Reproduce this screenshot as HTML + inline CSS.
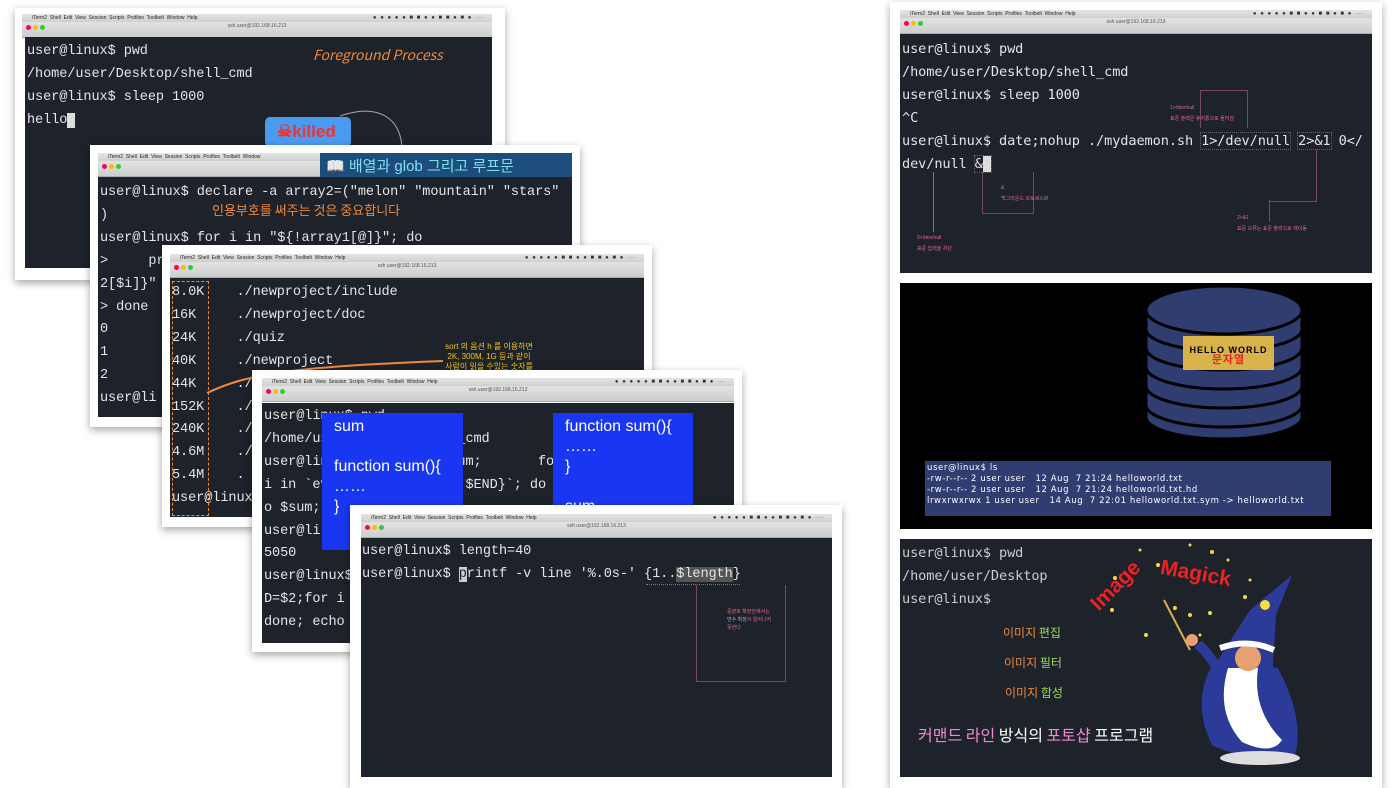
<!DOCTYPE html>
<html><head><meta charset="utf-8"><style>
*{margin:0;padding:0;box-sizing:border-box}
body{width:1400px;height:788px;background:#fff;position:relative;overflow:hidden;font-family:"Liberation Sans","Noto Sans CJK KR",sans-serif}
.card{position:absolute;background:#fff;box-shadow:0 3px 8px rgba(0,0,0,.35)}
.mb{position:absolute;height:8px;background:linear-gradient(#e4e4e4,#cfcfcf);font-size:5px;color:#222;line-height:8px;padding-left:10px;white-space:nowrap;overflow:hidden}
.mb::after{content:"● ● ● ● ● ■ ■ ● ● ■ ■ ● ■ ● ···";position:absolute;right:8px;top:0;font-size:6px;color:#333;letter-spacing:1px}
.tb{position:absolute;height:16px;background:linear-gradient(#e2e2e2,#cdcdcd);border-bottom:1px solid #aaa}
.tb i{position:absolute;top:3px;width:5px;height:5px;border-radius:50%}
.tb span{position:absolute;top:1px;left:0;right:0;text-align:center;font-size:5px;color:#555}
.term{position:absolute;background:#1e222b;overflow:hidden}
.t{position:absolute;margin-top:3px;font-family:"Liberation Mono","DejaVu Sans Mono",monospace;font-size:13.6px;color:#e4e4e4;white-space:pre;letter-spacing:-.1px;line-height:22.9px}
.hand{font-family:"Noto Sans CJK KR",sans-serif;position:absolute;white-space:nowrap}
.blue{position:absolute;background:#1937f2;color:#fff;font-size:16px;font-family:"Liberation Sans",sans-serif;padding:4px 12px;line-height:20px}
.small{position:absolute;font-size:5px;color:#e06a8a;white-space:nowrap}
.ln{position:absolute;border:1px solid #7a4a5a}
</style></head><body>

<!-- Window 1 -->
<div class="card" style="left:15px;top:8px;width:490px;height:272px"></div>
<div class="mb" style="left:22px;top:14px;width:470px"> iTerm2 &nbsp;Shell &nbsp;Edit &nbsp;View &nbsp;Session &nbsp;Scripts &nbsp;Profiles &nbsp;Toolbelt &nbsp;Window &nbsp;Help</div>
<div class="tb" style="left:22px;top:22px;width:470px"><i style="left:4px;background:#f05"></i><i style="left:11px;background:#fb0"></i><i style="left:18px;background:#3c3"></i><span>ssh user@192.168.16.213</span></div>
<div class="term" style="left:25px;top:37px;width:467px;height:231px"></div>
<div class="t" style="left:27px;top:38px">user@linux$ pwd
/home/user/Desktop/shell_cmd
user@linux$ sleep 1000
hello<span style="background:#ddd">&nbsp;</span></div>
<div class="hand" style="left:313px;top:45px;color:#f08a3a;font-size:14px;font-style:italic">Foreground Process</div>
<div style="position:absolute;left:265px;top:117px;width:86px;height:30px;background:#4a9bf0;border-radius:5px;color:#e33;font-weight:bold;font-size:17px;padding:5px 0 0 12px">☠killed</div>
<svg style="position:absolute;left:340px;top:110px" width="70" height="40"><path d="M0 6 C40 -8 62 10 62 40" stroke="#aaa" fill="none"/></svg>

<!-- Window 2 -->
<div class="card" style="left:90px;top:145px;width:490px;height:282px"></div>
<div class="mb" style="left:98px;top:153px;width:474px"> iTerm2 &nbsp;Shell &nbsp;Edit &nbsp;View &nbsp;Session &nbsp;Scripts &nbsp;Profiles &nbsp;Toolbelt &nbsp;Window</div>
<div class="tb" style="left:98px;top:161px;width:474px"><i style="left:4px;background:#f05"></i><i style="left:11px;background:#fb0"></i><i style="left:18px;background:#3c3"></i></div>
<div style="position:absolute;left:320px;top:153px;width:252px;height:24px;background:#1d4d7c;color:#7fe0f0;font-size:15px;padding:2px 0 0 6px;font-family:'Liberation Sans','Noto Sans CJK KR',sans-serif">📖 배열과 glob 그리고 루프문</div>
<div class="term" style="left:98px;top:177px;width:474px;height:240px"></div>
<div class="t" style="left:100px;top:179px">user@linux$ declare -a array2=("melon" "mountain" "stars"
)
user@linux$ for i in "${!array1[@]}"; do
&gt;     pr
2[$i]}"
&gt; done
0
1
2
user@li</div>
<div class="hand" style="left:212px;top:200px;color:#f08a3a;font-size:13px">인용부호를 써주는 것은 중요합니다</div>

<!-- Window 3 -->
<div class="card" style="left:162px;top:245px;width:490px;height:282px"></div>
<div class="mb" style="left:170px;top:254px;width:474px"> iTerm2 &nbsp;Shell &nbsp;Edit &nbsp;View &nbsp;Session &nbsp;Scripts &nbsp;Profiles &nbsp;Toolbelt &nbsp;Window &nbsp;Help</div>
<div class="tb" style="left:170px;top:262px;width:474px"><i style="left:4px;background:#f05"></i><i style="left:11px;background:#fb0"></i><i style="left:18px;background:#3c3"></i><span>ssh user@192.168.16.213</span></div>
<div class="term" style="left:170px;top:278px;width:474px;height:239px"></div>
<div style="position:absolute;left:172px;top:281px;width:37px;height:235px;border:1.5px dashed #f08a3a"></div>
<div class="t" style="left:172px;top:279px">8.0K    ./newproject/include
16K     ./newproject/doc
24K     ./quiz
40K     ./newproject
44K     ./
152K    ./
240K    ./
4.6M    ./
5.4M    .
user@linux</div>
<div style="position:absolute;left:444px;top:342px;font-size:8px;color:#f5c518;line-height:10px;text-align:center;width:90px">sort 의 옵션 h 를 이용하면<br>2K, 300M, 1G 등과 같이<br>사람이 읽을 수있는 숫자를</div>
<svg style="position:absolute;left:205px;top:355px" width="240" height="40"><path d="M2 38 C40 20 80 12 238 6" stroke="#f08a3a" stroke-width="2" fill="none"/></svg>

<!-- Window 4 -->
<div class="card" style="left:252px;top:370px;width:490px;height:282px"></div>
<div class="mb" style="left:262px;top:378px;width:472px"> iTerm2 &nbsp;Shell &nbsp;Edit &nbsp;View &nbsp;Session &nbsp;Scripts &nbsp;Profiles &nbsp;Toolbelt &nbsp;Window &nbsp;Help</div>
<div class="tb" style="left:262px;top:386px;width:472px"><i style="left:4px;background:#f05"></i><i style="left:11px;background:#fb0"></i><i style="left:18px;background:#3c3"></i><span>ssh user@192.168.16.213</span></div>
<div class="term" style="left:262px;top:403px;width:472px;height:240px"></div>
<div class="t" style="left:264px;top:403px">user@linux$ pwd
/home/user/Desktop/shell_cmd
user@linux$ declare -i sum;       for
i in `eval echo {$START..$END}`; do  ech
o $sum;
user@li
5050
user@linux$
D=$2;for i
done; echo</div>
<div class="blue" style="left:322px;top:413px;width:141px;height:137px">sum<br><br>function sum(){<br>……<br>}</div>
<div class="blue" style="left:553px;top:413px;width:140px;height:98px">function sum(){<br>……<br>}<br><br>sum</div>

<!-- Window 5 -->
<div class="card" style="left:350px;top:505px;width:492px;height:283px"></div>
<div class="mb" style="left:361px;top:514px;width:471px"> iTerm2 &nbsp;Shell &nbsp;Edit &nbsp;View &nbsp;Session &nbsp;Scripts &nbsp;Profiles &nbsp;Toolbelt &nbsp;Window &nbsp;Help</div>
<div class="tb" style="left:361px;top:522px;width:471px"><i style="left:4px;background:#f05"></i><i style="left:11px;background:#fb0"></i><i style="left:18px;background:#3c3"></i><span>ssh user@192.168.16.213</span></div>
<div class="term" style="left:361px;top:538px;width:471px;height:239px"></div>
<div class="t" style="left:362px;top:538px">user@linux$ length=40
user@linux$ <span style="background:#ccc;color:#222">p</span>rintf -v line '%.0s-' {1..<span style="background:#555">$length</span>}</div>
<div style="position:absolute;left:646px;top:584px;width:94px;border-top:1px dotted #777"></div>
<div class="ln" style="left:696px;top:585px;width:90px;height:97px;border-top:none"></div>
<div class="small" style="left:727px;top:608px;line-height:8px;background:#1e222b">중괄호 확장안에서는<br><span style="color:#8ad">변수 확장</span>이 일어나지<br>못한다</div>

<!-- Right card -->
<div class="card" style="left:890px;top:2px;width:492px;height:786px"></div>
<div class="mb" style="left:900px;top:10px;width:472px"> iTerm2 &nbsp;Shell &nbsp;Edit &nbsp;View &nbsp;Session &nbsp;Scripts &nbsp;Profiles &nbsp;Toolbelt &nbsp;Window &nbsp;Help</div>
<div class="tb" style="left:900px;top:18px;width:472px"><i style="left:4px;background:#f05"></i><i style="left:11px;background:#fb0"></i><i style="left:18px;background:#3c3"></i><span>ssh user@192.168.16.213</span></div>
<div class="term" style="left:900px;top:34px;width:472px;height:239px"></div>
<div class="t" style="left:902px;top:35px;font-family:'DejaVu Sans Mono',monospace;font-size:13.6px">user@linux$ pwd
/home/user/Desktop/shell_cmd
user@linux$ sleep 1000
^C
user@linux$ date;nohup ./mydaemon.sh <span style="outline:1px dotted #666">1&gt;/dev/null</span> <span style="outline:1px dotted #666">2&gt;&amp;1</span> 0&lt;/
dev/null <span style="outline:1px dotted #666">&amp;<span style="background:#ddd">&nbsp;</span></span></div>
<div class="ln" style="left:1200px;top:90px;width:48px;height:38px;border-bottom:none"></div>
<div class="small" style="left:1170px;top:103px;line-height:11px">1&gt;/dev/null<br>표준 출력은 휴지통으로 들어감</div>
<div class="ln" style="left:982px;top:172px;width:52px;height:42px;border-top:none"></div>
<div class="small" style="left:1001px;top:183px;line-height:11px">&amp;<br>백그라운드 프로세스화</div>
<div style="position:absolute;left:933px;top:172px;height:60px;border-left:1px solid #777"></div>
<div class="small" style="left:917px;top:233px;line-height:11px">0&lt;/dev/null<br>표준 입력을 차단</div>
<div class="ln" style="left:1269px;top:150px;width:48px;height:52px;border-top:none;border-left:none"></div>
<div style="position:absolute;left:1269px;top:200px;height:22px;border-left:1px solid #7a4a5a"></div>
<div class="small" style="left:1237px;top:213px;line-height:11px">2&gt;&amp;1<br>표준 오류는 표준 출력으로 재이동</div>

<div style="position:absolute;left:900px;top:283px;width:472px;height:246px;background:#000"></div>
<svg style="position:absolute;left:1144px;top:283px" width="162" height="158">
<g fill="#2f3d70" stroke="#000" stroke-width="3">
<path d="M2 122 v12 a78 22 0 0 0 156 0 v-12z"/>
<path d="M2 103 v19 a78 22 0 0 0 156 0 v-19z"/>
<path d="M2 84 v19 a78 22 0 0 0 156 0 v-19z"/>
<path d="M2 65 v19 a78 22 0 0 0 156 0 v-19z"/>
<path d="M2 46 v19 a78 22 0 0 0 156 0 v-19z"/>
<path d="M2 27 v19 a78 22 0 0 0 156 0 v-19z"/>
<ellipse cx="80" cy="27" rx="78" ry="24"/>
</g></svg>
<div style="position:absolute;left:1183px;top:336px;width:91px;height:34px;background:#d8b24a;text-align:center;font-size:9px;font-weight:bold;letter-spacing:1px;padding-top:9px;line-height:10px">HELLO WORLD<br><span style="color:#e22;font-size:11px">문자열</span></div>
<div style="position:absolute;left:925px;top:461px;width:406px;height:55px;background:#2f3d70;color:#fff;font-size:8.5px;font-family:'DejaVu Sans',sans-serif;letter-spacing:.6px;white-space:pre;line-height:11px;padding:2px 2px">user@linux$ ls
-rw-r--r-- 2 user user   12 Aug  7 21:24 helloworld.txt
-rw-r--r-- 2 user user   12 Aug  7 21:24 helloworld.txt.hd
lrwxrwxrwx 1 user user   14 Aug  7 22:01 helloworld.txt.sym -&gt; helloworld.txt</div>

<div class="term" style="left:900px;top:539px;width:472px;height:238px"></div>
<div class="t" style="left:902px;top:539px;font-family:'DejaVu Sans Mono',monospace;font-size:13.6px;color:#ccc">user@linux$ pwd
/home/user/Desktop
user@linux$</div>
<div class="hand" style="left:1003px;top:624px;font-size:12px;color:#f08a3a">이미지 <span style="color:#9d5">편집</span></div>
<div class="hand" style="left:1004px;top:654px;font-size:12px;color:#f08a3a">이미지 <span style="color:#9d5">필터</span></div>
<div class="hand" style="left:1005px;top:684px;font-size:12px;color:#f08a3a">이미지 <span style="color:#9d5">합성</span></div>
<div class="hand" style="left:918px;top:722px;font-size:16px;color:#f08ad0">커맨드 라인 <span style="color:#fff">방식의</span> 포토샵 <span style="color:#fff">프로그램</span></div>
<div style="position:absolute;left:1103px;top:592px;color:#e22;font-weight:bold;font-size:21px;transform:rotate(-45deg);transform-origin:left bottom">Image</div>
<div style="position:absolute;left:1160px;top:562px;color:#e22;font-weight:bold;font-size:21px;transform:rotate(10deg)">Magick</div>
<svg style="position:absolute;left:1100px;top:540px" width="220" height="230">
<g fill="#ffd83a"><circle cx="40" cy="10" r="1.5"/><circle cx="58" cy="25" r="2"/><circle cx="90" cy="5" r="1.5"/><circle cx="112" cy="12" r="2"/><circle cx="128" cy="20" r="1.5"/><circle cx="12" cy="70" r="2"/><circle cx="75" cy="68" r="2"/><circle cx="90" cy="75" r="2"/><circle cx="110" cy="73" r="2"/><circle cx="145" cy="57" r="2"/><circle cx="46" cy="95" r="2"/><circle cx="15" cy="38" r="2"/><circle cx="150" cy="40" r="1.5"/><circle cx="100" cy="95" r="1.5"/></g>
<path d="M64 60 L90 110" stroke="#d9b04a" stroke-width="2"/>
<path d="M118 120 L150 70 L192 35 L176 75 L172 140z" fill="#2c3b9a"/>
<circle cx="165" cy="65" r="5" fill="#ffd83a"/>
<path d="M115 120 Q90 160 112 205 Q145 222 195 215 Q205 180 178 128z" fill="#2c3b9a"/>
<path d="M128 128 Q115 172 142 202 Q172 216 182 200 Q152 170 158 128z" fill="#fff"/>
<circle cx="148" cy="118" r="13" fill="#e8a070"/>
<path d="M120 108 Q148 98 174 110" stroke="#fff" stroke-width="6" fill="none"/>
<circle cx="92" cy="100" r="6" fill="#e8a070"/>
<path d="M98 104 Q110 115 118 130" stroke="#2c3b9a" stroke-width="10" fill="none"/>
<ellipse cx="160" cy="218" rx="40" ry="7" fill="#ddd"/>
</svg>
</body></html>
